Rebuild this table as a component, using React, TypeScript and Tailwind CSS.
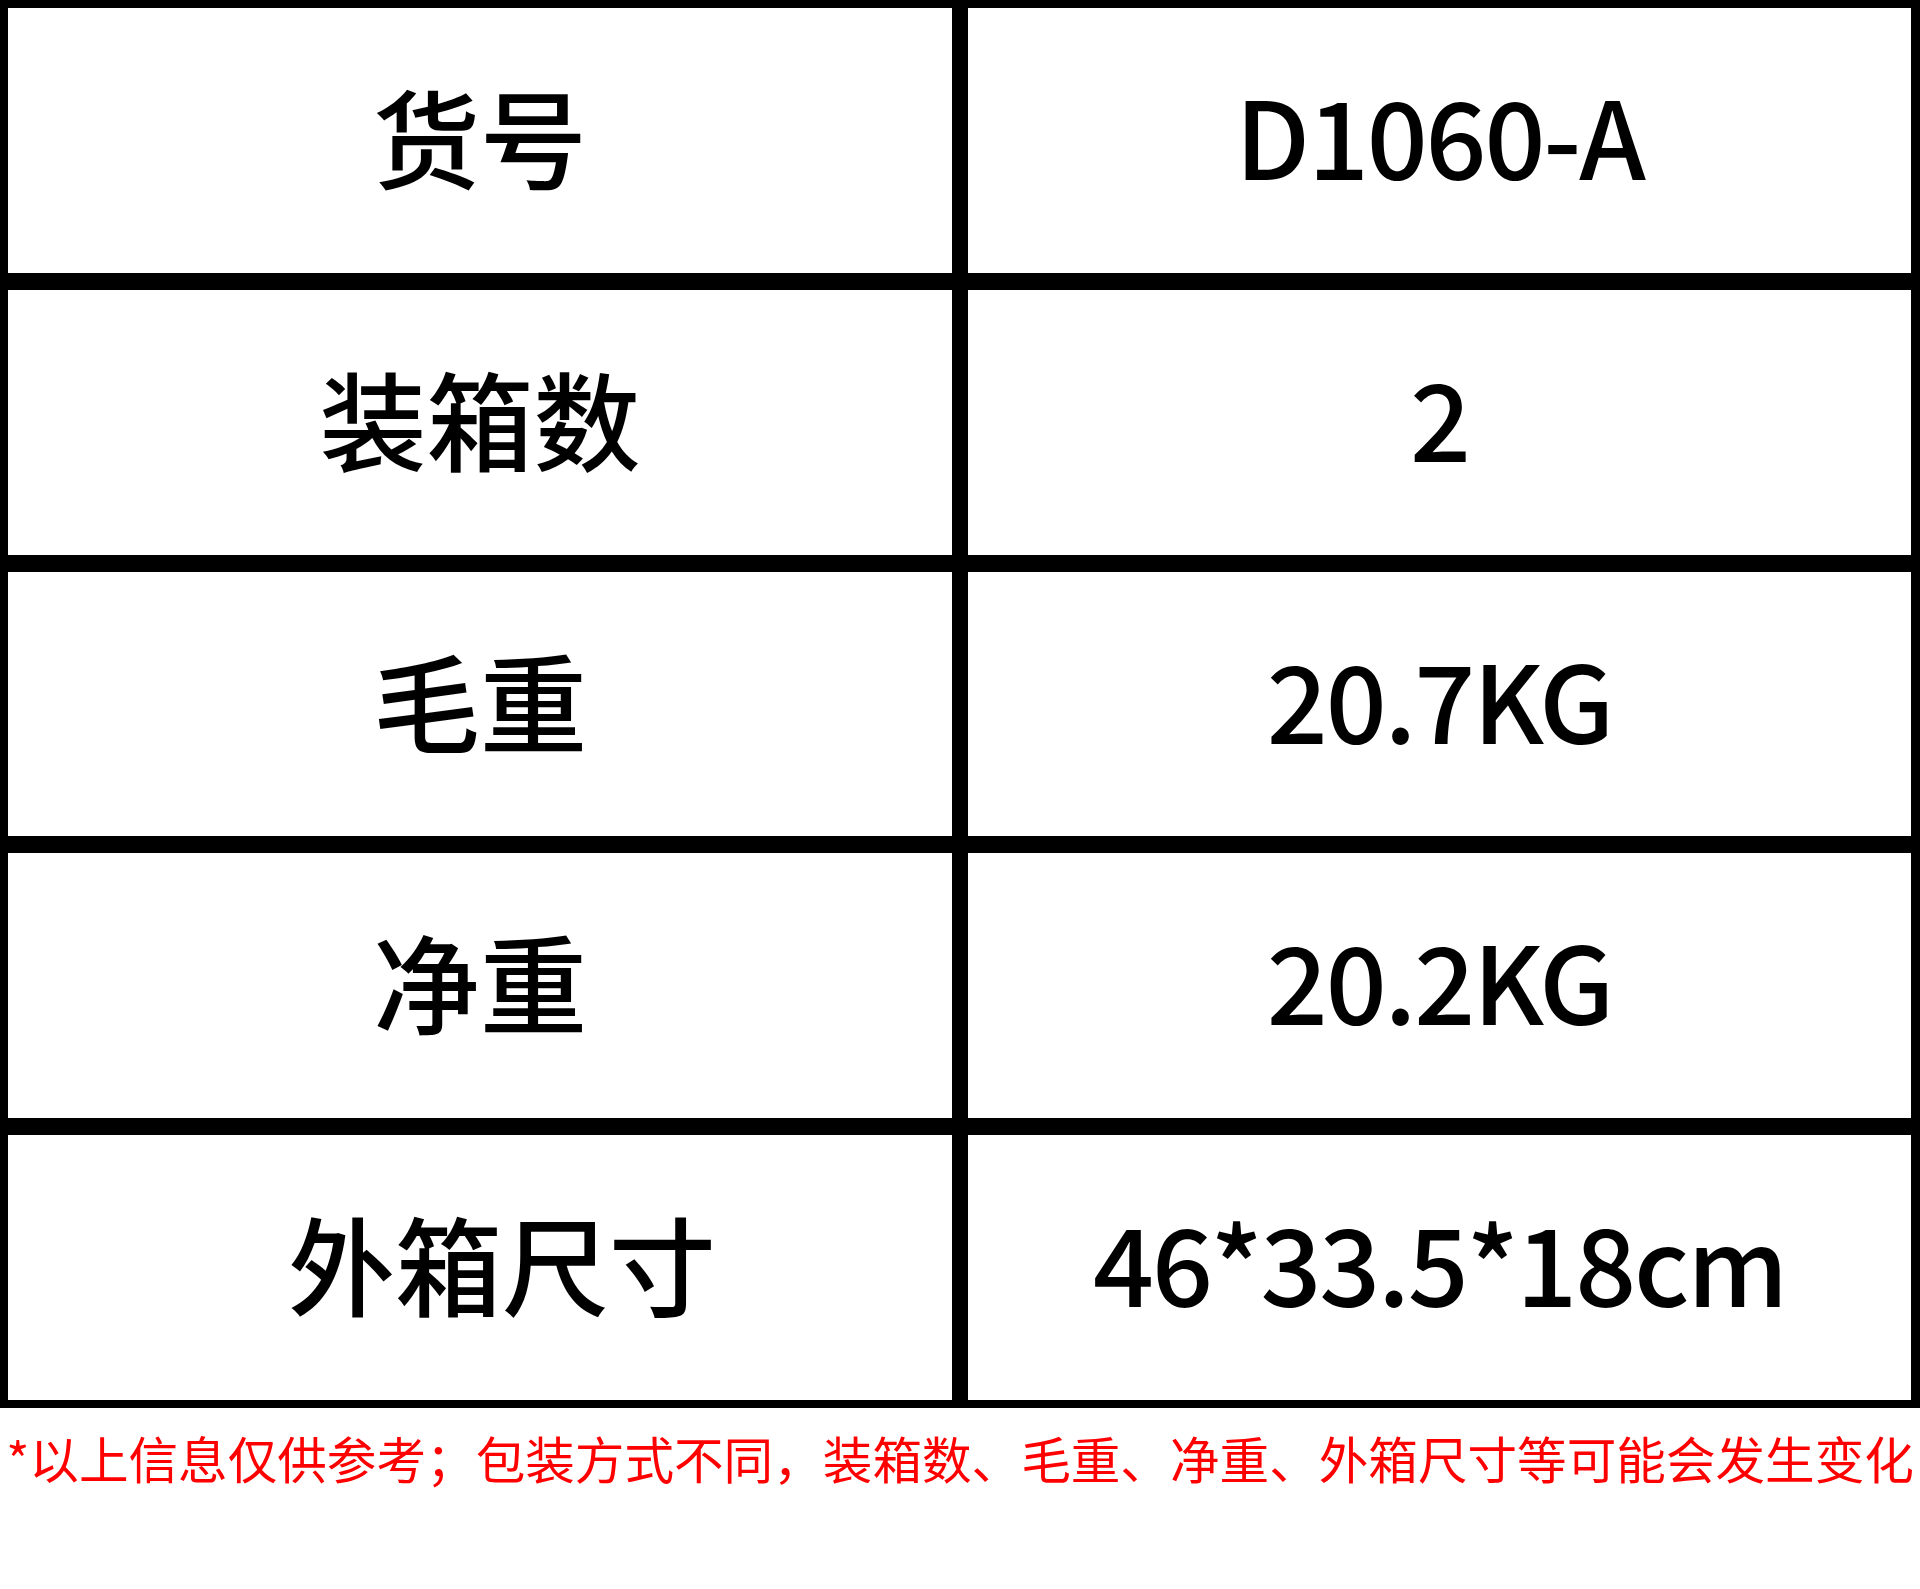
import React from "react";

const rows: { label: string; value: string; labelClass?: string }[] = [
  { label: "货号", value: "D1060-A" },
  { label: "装箱数", value: "2" },
  { label: "毛重", value: "20.7KG" },
  { label: "净重", value: "20.2KG" },
  { label: "外箱尺寸", value: "46*33.5*18cm", labelClass: "pl-[44px]" },
];

export default function App() {
  return (
    <div className="w-[1920px] h-[1589px] bg-white overflow-hidden">
      <div className="grid grid-cols-[944px_943px] grid-rows-[265px_265px_264px_265px_265px] gap-x-[16px] gap-y-[17px] bg-black pt-[8px] pl-[8px] pr-[9px] pb-[8px]">
        {rows.map((r) => (
          <React.Fragment key={r.label}>
            <div className="bg-white flex items-center justify-center">
              <span
                className={`pb-[12px] text-[107px] leading-none font-medium text-black ${r.labelClass ?? ""}`}
                style={{ fontFamily: '"Noto Sans CJK SC", sans-serif' }}
              >
                {r.label}
              </span>
            </div>
            <div className="bg-white flex items-center justify-center">
              <span
                className="pb-[14px] text-[107px] leading-none font-medium tracking-[-0.02em] text-black"
                style={{ fontFamily: '"Noto Sans CJK SC", sans-serif' }}
              >
                {r.value}
              </span>
            </div>
          </React.Fragment>
        ))}
      </div>
      <p
        className="mt-[25px] text-center text-[49.6px] leading-[49px] text-[#ff0000] whitespace-nowrap"
        style={{ fontFamily: '"Noto Sans CJK SC", sans-serif' }}
      >
        *以上信息仅供参考；包装方式不同，装箱数、毛重、净重、外箱尺寸等可能会发生变化
      </p>
    </div>
  );
}
